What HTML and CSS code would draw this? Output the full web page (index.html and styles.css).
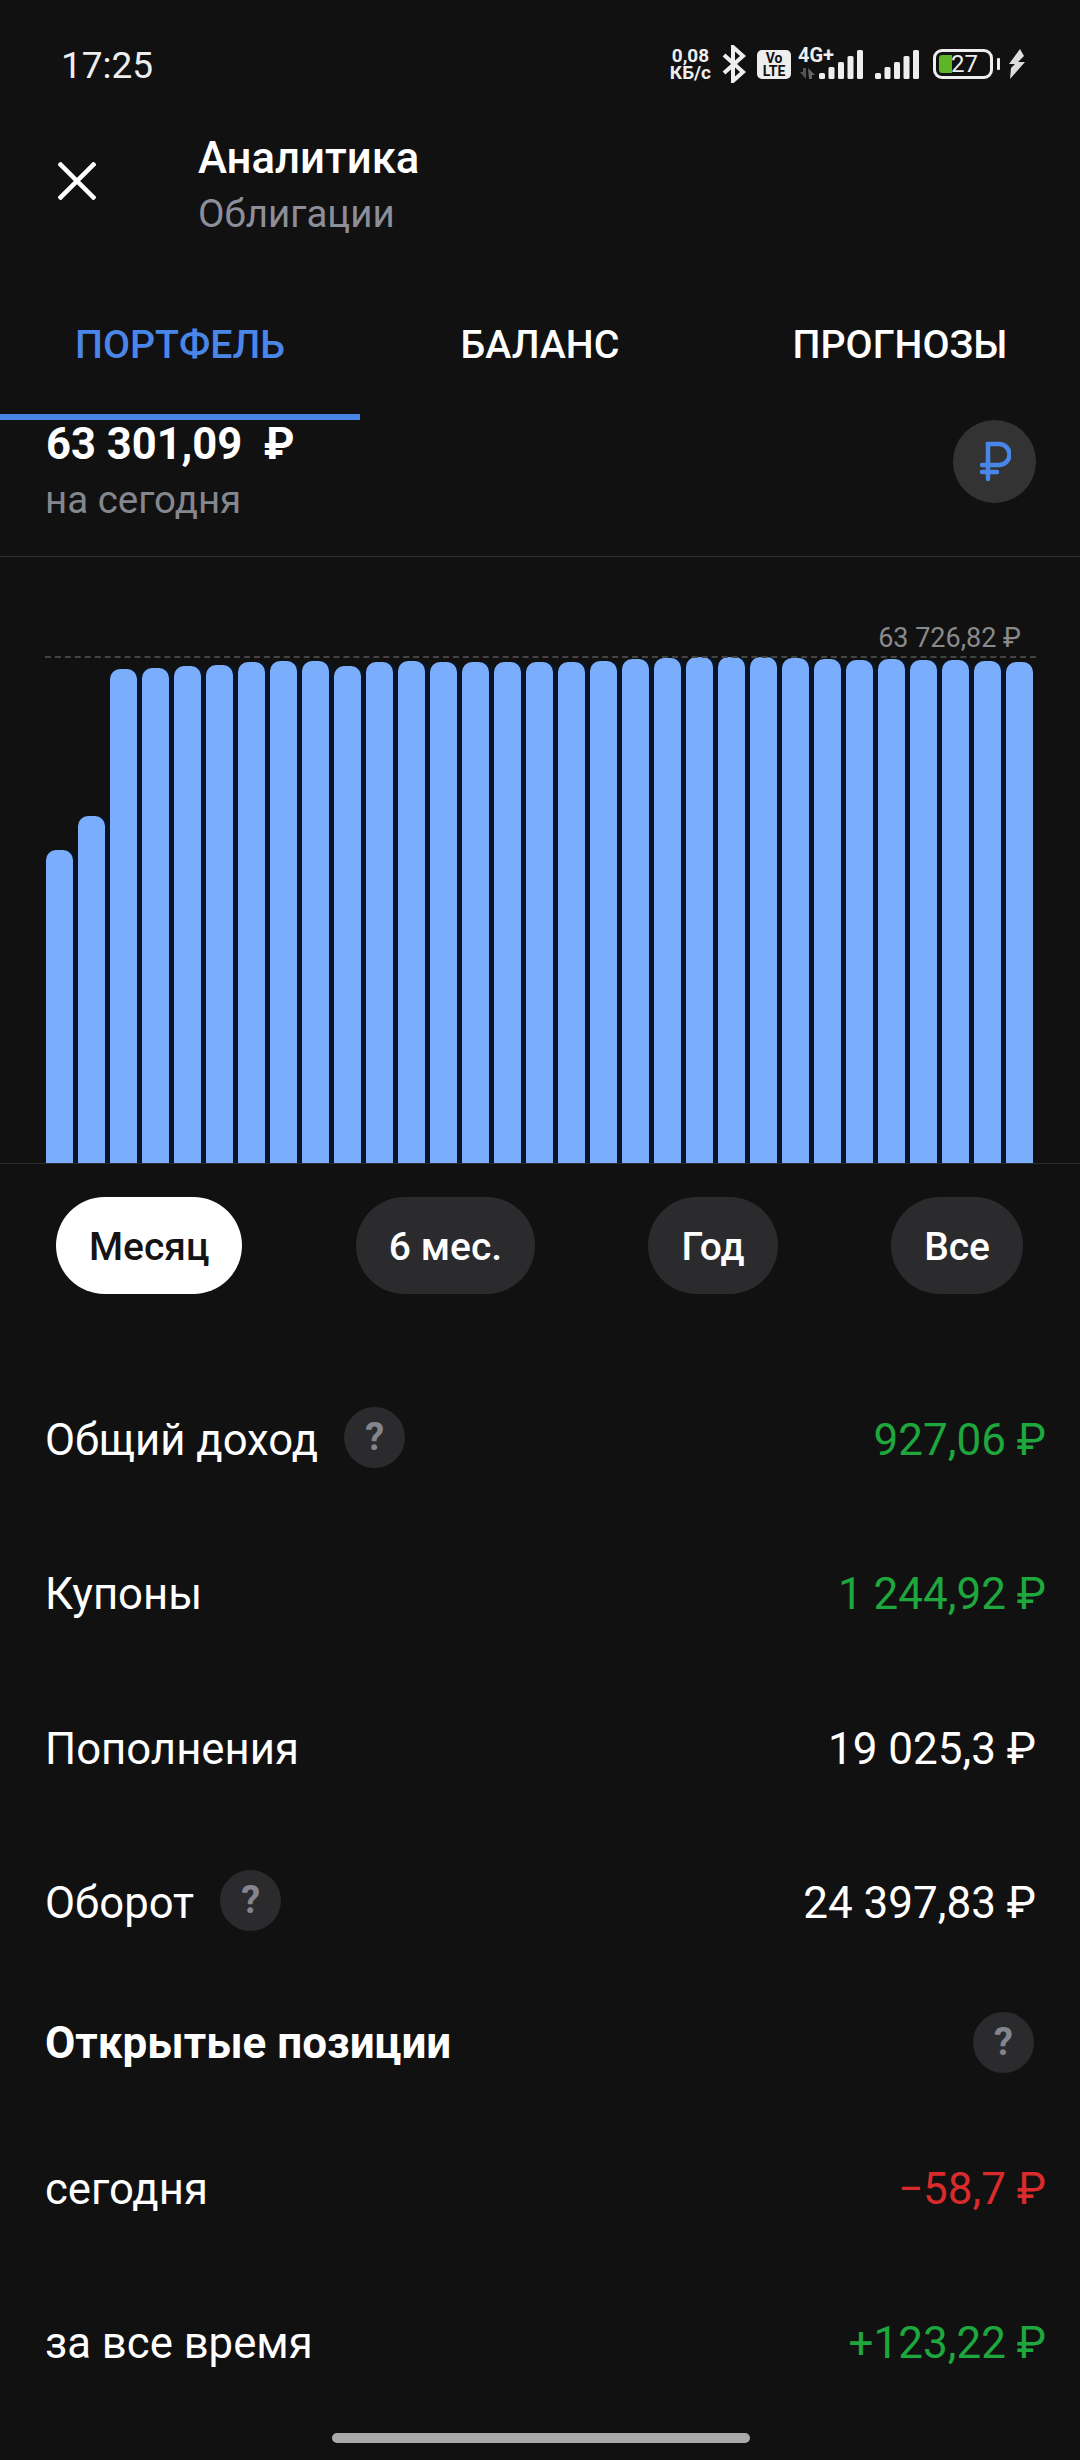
FILE: index.html
```html
<!DOCTYPE html>
<html lang="ru">
<head>
    <meta charset="UTF-8">
    <meta name="viewport" content="width=device-width, initial-scale=1.0">
    <title>Аналитика</title>
    <link rel="stylesheet" href="styles.css">
</head>
<body>
    <div class="screen">
        <div class="status-bar">
            <span class="time">17:25</span>
            <div class="status-icons">
                <div class="net-speed">
                    <div class="net-line">0,08</div>
                    <div class="net-line">КБ/с</div>
                </div>
                <svg class="ic-bt" width="24" height="38" viewBox="0 0 24 38" fill="none" stroke="#eee" stroke-width="4"><path d="M2 10 L21 27 L11 36 V2 L21 11 L2 28"/></svg>
                <div class="volte">
                    <div class="volte-line">Vo</div>
                    <div class="volte-line">LTE</div>
                </div>
                <div class="signal signal-first">
                    <span class="net-type">4G+</span>
                    <svg class="arrows" width="15" height="11" viewBox="0 0 15 11"><path d="M0 4 H3 V0 H6 V11 Z" fill="#555"/><path d="M8 0 L15 7 H12 V11 H9 Z" fill="#666"/></svg>
                    <svg width="44" height="29" viewBox="0 0 44 29" fill="#eee"><rect x="0" y="23" width="6" height="6" rx="1.5"/><rect x="9.5" y="17" width="6" height="12" rx="1.5"/><rect x="19" y="12" width="6" height="17" rx="1.5"/><rect x="28.500" y="6" width="6" height="23" rx="1.500"/><rect x="38" y="0" width="6" height="29" rx="1.500"/></svg>
                </div>
                <svg class="ic-signal2" width="44" height="29" viewBox="0 0 44 29" fill="#eee"><rect x="0" y="23" width="6" height="6" rx="1.5"/><rect x="9.5" y="17" width="6" height="12" rx="1.5"/><rect x="19" y="12" width="6" height="17" rx="1.5"/><rect x="28.500" y="6" width="6" height="23" rx="1.500"/><rect x="38" y="0" width="6" height="29" rx="1.500"/></svg>
                <div class="battery">
                    <div class="battery-body"><span class="battery-fill"></span><span class="battery-num">27</span></div>
                    <span class="battery-tip"></span>
                </div>
                <svg width="18" height="30" viewBox="0 0 18 30" fill="#ddd"><path d="M12 0 L1 15 H7 L3 19 L2 30 L17 13 H10 L16 7 Z"/></svg>
            </div>
        </div>

        <div class="header">
            <svg class="close" width="38" height="38" viewBox="0 0 38 38" stroke="#fff" stroke-width="4.500"><path d="M1 1 L37 37 M37 1 L1 37"/></svg>
            <div class="header-text">
                <div class="title">Аналитика</div>
                <div class="subtitle">Облигации</div>
            </div>
        </div>

        <div class="tabs">
            <div class="tab active">ПОРТФЕЛЬ</div>
            <div class="tab">БАЛАНС</div>
            <div class="tab">ПРОГНОЗЫ</div>
        </div>

        <div class="balance">
            <div>
                <div class="balance-value">63 301,09&nbsp; ₽</div>
                <div class="balance-sub">на сегодня</div>
            </div>
            <div class="currency-btn">
                <svg width="32" height="41" viewBox="0 0 32 41" fill="none" stroke="#4a86e8" stroke-width="4.500" stroke-linecap="round"><path d="M9 38 V3 H20 A10.500 10.500 0 0 1 20 24 H3 M3 31 H18"/></svg>
            </div>
        </div>

        <div class="chart">
            <span class="chart-max">63 726,82 ₽</span>
            <div class="chart-line"></div>
            <div class="bars" id="bars"></div>
        </div>

        <div class="periods">
            <div class="pill selected">Месяц</div>
            <div class="pill">6 мес.</div>
            <div class="pill">Год</div>
            <div class="pill">Все</div>
        </div>

        <div class="rows">
            <div class="row">
                <div class="row-label">Общий доход <span class="help">?</span></div>
                <div class="row-value green">927,06 ₽</div>
            </div>
            <div class="row">
                <div class="row-label">Купоны</div>
                <div class="row-value green">1 244,92 ₽</div>
            </div>
            <div class="row">
                <div class="row-label">Пополнения</div>
                <div class="row-value inset">19 025,3 ₽</div>
            </div>
            <div class="row">
                <div class="row-label">Оборот <span class="help">?</span></div>
                <div class="row-value inset">24 397,83 ₽</div>
            </div>
            <div class="section-head">
                <div class="section-title">Открытые позиции</div>
                <span class="help">?</span>
            </div>
            <div class="row">
                <div class="row-label">сегодня</div>
                <div class="row-value red">−58,7 ₽</div>
            </div>
            <div class="row">
                <div class="row-label">за все время</div>
                <div class="row-value green">+123,22 ₽</div>
            </div>
        </div>

        <div class="home-bar"></div>
    </div>

    <script>
        const tops = [850, 816, 669, 668, 666, 665, 662, 661, 661, 666, 662, 661, 662, 662, 662, 662, 662, 661, 659, 658, 657, 657, 657, 658, 659, 660, 659, 660, 660, 661, 662];
        const bottom = 1163;
        const bars = document.getElementById('bars');
        tops.forEach(top => {
            const bar = document.createElement('div');
            bar.className = 'bar';
            bar.style.height = (bottom - top) + 'px';
            bars.appendChild(bar);
        });
    </script>
</body>
</html>
```

FILE: styles.css
```css
body {
    margin: 0;
    background-color: #111112;
    font-family: Roboto, "Liberation Sans", sans-serif;
    color: #fff;
}
.screen {
    width: 1080px;
    height: 2460px;
    overflow: hidden;
    position: relative;
}
.status-bar {
    height: 128px;
    box-sizing: border-box;
    padding: 0 54px 0 61px;
    display: flex;
    align-items: center;
    justify-content: space-between;
}
.time {
    font-size: 37px;
    color: #eee;
    margin-top: 2px;
}
.status-icons {
    display: flex;
    align-items: center;
}
.net-speed {
    font-size: 19px;
    font-weight: 700;
    color: #eee;
    text-align: center;
    margin-right: 11px;
}
.net-line {
    height: 17px;
    line-height: 17px;
}
.volte {
    width: 34px;
    height: 29px;
    margin-left: 11px;
    background-color: #eee;
    border-radius: 5px;
    color: #111;
    font-size: 14px;
    font-weight: 700;
    text-align: center;
    padding-top: 2px;
    box-sizing: border-box;
}
.volte-line {
    height: 13px;
    line-height: 13px;
}
.signal {
    position: relative;
    width: 65px;
    height: 29px;
    margin-left: 7px;
    display: flex;
    justify-content: flex-end;
}
.net-type {
    position: absolute;
    left: 0;
    top: -3px;
    font-size: 20px;
    font-weight: 700;
    line-height: 17px;
    color: #eee;
}
.arrows {
    position: absolute;
    left: 2px;
    bottom: 0;
}
.ic-signal2 {
    margin-left: 12px;
}
.battery {
    display: flex;
    align-items: center;
    margin-left: 14px;
    margin-right: 8px;
}
.battery-body {
    position: relative;
    width: 60px;
    height: 30px;
    box-sizing: border-box;
    border: 3px solid #eee;
    border-radius: 9px;
}
.battery-fill {
    position: absolute;
    left: 3px;
    top: 3px;
    bottom: 3px;
    width: 13px;
    background-color: #5fb526;
    border-radius: 3px 0 0 3px;
}
.battery-num {
    position: absolute;
    left: 15px;
    top: 0;
    font-size: 24px;
    line-height: 24px;
    color: #eee;
}
.battery-tip {
    width: 3px;
    height: 12px;
    margin-left: 4px;
    background-color: #eee;
    border-radius: 1px;
}
.header {
    height: 130px;
    display: flex;
    align-items: flex-start;
    box-sizing: border-box;
    padding-left: 58px;
}
.close {
    margin-top: 34px;
}
.header-text {
    margin-left: 102px;
}
.title {
    font-size: 43.7px;
    font-weight: 500;
    line-height: 50px;
    margin-top: 5px;
}
.subtitle {
    font-size: 38.5px;
    line-height: 50px;
    margin-top: 6px;
    color: #8c8f99;
}
.tabs {
    height: 162px;
    box-sizing: border-box;
    display: flex;
    position: relative;
}
.tab {
    width: 360px;
    height: 162px;
    box-sizing: border-box;
    padding-top: 66px;
    font-size: 39.3px;
    font-weight: 500;
    line-height: 42px;
    text-align: center;
}
.tab.active {
    color: #4a86e8;
    border-bottom: 6px solid #4a86e8;
}
.balance {
    height: 137px;
    box-sizing: border-box;
    padding: 0 44px 0 45px;
    display: flex;
    justify-content: space-between;
    align-items: flex-start;
    border-bottom: 1px solid #333;
}
.balance-value {
    font-size: 43.5px;
    font-weight: 700;
    line-height: 50px;
    margin-left: 1px;
}
.balance-sub {
    font-size: 38.5px;
    line-height: 44px;
    margin-top: 8px;
    color: #85878e;
}
.currency-btn {
    width: 83px;
    height: 83px;
    border-radius: 50%;
    background-color: #333;
    display: flex;
    align-items: center;
    justify-content: center;
}
.chart {
    height: 607px;
    position: relative;
    border-bottom: 1px solid #2c2c2e;
    display: flex;
    align-items: flex-end;
    padding-left: 46px;
    box-sizing: border-box;
}
.chart-max {
    position: absolute;
    right: 59px;
    top: 65px;
    font-size: 27px;
    line-height: 32px;
    color: #8a8a8a;
}
.chart-line {
    position: absolute;
    left: 45px;
    right: 44px;
    top: 99px;
    border-top: 2px dashed #444;
}
.bars {
    display: flex;
    align-items: flex-end;
    gap: 5px;
}
.bar {
    width: 27px;
    background-color: #7aaefc;
    border-radius: 10px 10px 0 0;
    box-shadow: 5px 0 0 #0a1524;
}
.bar:last-child {
    box-shadow: none;
}
.periods {
    display: flex;
    justify-content: space-between;
    padding: 33px 57px 0 56px;
}
.pill {
    height: 97px;
    padding: 0 33px;
    border-radius: 48.5px;
    background-color: #2b2b2d;
    font-size: 39px;
    font-weight: 500;
    line-height: 100px;
}
.pill.selected {
    background-color: #fff;
    color: #141414;
}
.rows {
    padding: 116px 34px 0 45px;
}
.row {
    height: 154.4px;
    display: flex;
    align-items: flex-start;
    justify-content: space-between;
}
.row-label {
    font-size: 43.7px;
    line-height: 60px;
    height: 60px;
    display: flex;
    align-items: center;
    gap: 26px;
}
.row-label .help {
    margin-top: -5px;
}
.row-value {
    font-size: 44px;
    line-height: 60px;
}
.row-value.inset {
    margin-right: 10px;
}
.green {
    color: #1ea73c;
}
.red {
    color: #d92b2b;
}
.help {
    width: 61px;
    height: 61px;
    border-radius: 50%;
    background-color: #2b2b2d;
    color: #85858f;
    font-size: 38px;
    font-weight: 700;
    line-height: 61px;
    text-align: center;
    display: inline-block;
}
.section-head {
    display: flex;
    justify-content: space-between;
    align-items: center;
    height: 60px;
    margin: -15px 0 86px 0;
    padding-right: 12px;
}
.section-title {
    font-size: 44px;
    font-weight: 700;
}
.home-bar {
    position: absolute;
    left: 332px;
    top: 2433px;
    width: 418px;
    height: 10px;
    border-radius: 5px;
    background-color: #aaa;
}
```
